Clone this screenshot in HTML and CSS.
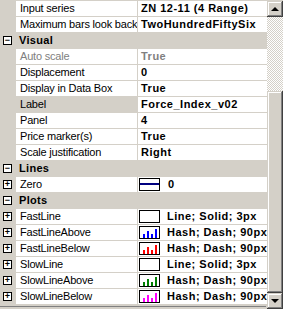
FILE: index.html
```html
<!DOCTYPE html>
<html lang="en">
<head>
    <meta charset="UTF-8">
    <title>Indicator Properties</title>
    <link rel="stylesheet" href="styles.css">
</head>
<body>
    <div class="grid">
        <div class="rows">
            <div class="row"><span class="gut"></span><span class="name">Input series</span><span class="val">ZN 12-11 (4 Range)</span></div>
            <div class="row"><span class="gut"></span><span class="name">Maximum bars look back</span><span class="val">TwoHundredFiftySix</span></div>
            <div class="row cat"><span class="gut"><i class="box">&minus;</i></span><span class="title">Visual</span></div>
            <div class="row off"><span class="gut"></span><span class="name">Auto scale</span><span class="val">True</span></div>
            <div class="row"><span class="gut"></span><span class="name">Displacement</span><span class="val">0</span></div>
            <div class="row"><span class="gut"></span><span class="name">Display in Data Box</span><span class="val">True</span></div>
            <div class="row sel"><span class="gut"></span><span class="name">Label</span><span class="val">Force_Index_v02</span></div>
            <div class="row"><span class="gut"></span><span class="name">Panel</span><span class="val">4</span></div>
            <div class="row"><span class="gut"></span><span class="name">Price marker(s)</span><span class="val">True</span></div>
            <div class="row"><span class="gut"></span><span class="name">Scale justification</span><span class="val">Right</span></div>
            <div class="row cat"><span class="gut"><i class="box">&minus;</i></span><span class="title">Lines</span></div>
            <div class="row"><span class="gut"><i class="box">+</i></span><span class="name">Zero</span><span class="val">
                <svg class="swatch" width="21" height="13" viewBox="0 0 21 13"><rect x="0.5" y="0.5" width="20" height="12" fill="#fff" stroke="#000"/><rect x="1" y="5" width="19" height="2" fill="#000080"/></svg><span class="txt wide">0</span></span></div>
            <div class="row cat"><span class="gut"><i class="box">&minus;</i></span><span class="title">Plots</span></div>
            <div class="row"><span class="gut"><i class="box">+</i></span><span class="name">FastLine</span><span class="val">
                <svg class="swatch" width="21" height="13" viewBox="0 0 21 13"><rect x="0.5" y="0.5" width="20" height="12" fill="#fff" stroke="#000"/></svg><span class="txt">Line; Solid; 3px</span></span></div>
            <div class="row"><span class="gut"><i class="box">+</i></span><span class="name">FastLineAbove</span><span class="val">
                <svg class="swatch" width="21" height="13" viewBox="0 0 21 13"><rect x="0.5" y="0.5" width="20" height="12" fill="#fff" stroke="#000"/><g fill="#0000ff"><rect x="4" y="8" width="2" height="4"/><rect x="8" y="5" width="2" height="7"/><rect x="12" y="8" width="2" height="4"/><rect x="16" y="3" width="2" height="9"/></g></svg><span class="txt">Hash; Dash; 90px</span></span></div>
            <div class="row"><span class="gut"><i class="box">+</i></span><span class="name">FastLineBelow</span><span class="val">
                <svg class="swatch" width="21" height="13" viewBox="0 0 21 13"><rect x="0.5" y="0.5" width="20" height="12" fill="#fff" stroke="#000"/><g fill="#ff0000"><rect x="4" y="8" width="2" height="4"/><rect x="8" y="5" width="2" height="7"/><rect x="12" y="8" width="2" height="4"/><rect x="16" y="3" width="2" height="9"/></g></svg><span class="txt">Hash; Dash; 90px</span></span></div>
            <div class="row"><span class="gut"><i class="box">+</i></span><span class="name">SlowLine</span><span class="val">
                <svg class="swatch" width="21" height="13" viewBox="0 0 21 13"><rect x="0.5" y="0.5" width="20" height="12" fill="#fff" stroke="#000"/></svg><span class="txt">Line; Solid; 3px</span></span></div>
            <div class="row"><span class="gut"><i class="box">+</i></span><span class="name">SlowLineAbove</span><span class="val">
                <svg class="swatch" width="21" height="13" viewBox="0 0 21 13"><rect x="0.5" y="0.5" width="20" height="12" fill="#fff" stroke="#000"/><g fill="#008000"><rect x="4" y="8" width="2" height="4"/><rect x="8" y="5" width="2" height="7"/><rect x="12" y="8" width="2" height="4"/><rect x="16" y="3" width="2" height="9"/></g></svg><span class="txt">Hash; Dash; 90px</span></span></div>
            <div class="row"><span class="gut"><i class="box">+</i></span><span class="name">SlowLineBelow</span><span class="val">
                <svg class="swatch" width="21" height="13" viewBox="0 0 21 13"><rect x="0.5" y="0.5" width="20" height="12" fill="#fff" stroke="#000"/><g fill="#ff00ff"><rect x="4" y="8" width="2" height="4"/><rect x="8" y="5" width="2" height="7"/><rect x="12" y="8" width="2" height="4"/><rect x="16" y="3" width="2" height="9"/></g></svg><span class="txt">Hash; Dash; 90px</span></span></div>
            <div class="foot"></div>
        </div>
        <div class="scroll">
            <div class="btn"><i class="arrow up"></i></div>
            <div class="track"></div>
            <div class="thumb"></div>
            <div class="btn"><i class="arrow down"></i></div>
        </div>
    </div>
</body>
</html>
```

FILE: styles.css
```css
body {
    margin: 0;
    background-color: #d4d0c8;
    font-family: "Liberation Sans", Arial, sans-serif;
    font-size: 11px;
    color: black;
}

.grid {
    display: flex;
    gap: 1px;
    width: 283px;
    height: 309px;
    padding-top: 1px;
    box-sizing: border-box;
    overflow: hidden;
}

.rows {
    width: 266px;
    display: flex;
    flex-direction: column;
}

.row {
    display: grid;
    grid-template-columns: 15px 121px 129px;
    column-gap: 1px;
    height: 15px;
    line-height: 15px;
    border-bottom: 1px solid #d4d0c8;
    white-space: nowrap;
}

.gut {
    display: flex;
    align-items: center;
    justify-content: center;
}

.name, .val {
    background-color: white;
    overflow: hidden;
    padding-left: 4px;
}

.name {
    letter-spacing: -0.2px;
}

.val {
    display: flex;
    align-items: center;
    padding-left: 3px;
    font-weight: bold;
    letter-spacing: 0.5px;
}

.off .name, .off .val {
    color: #808080;
}

.sel .name {
    background-color: #d4d0c8;
}

.cat .title {
    grid-column: 2 / 4;
    padding-left: 3px;
    font-weight: bold;
    letter-spacing: 0.3px;
}

.box {
    display: block;
    width: 7px;
    height: 7px;
    border: 1px solid black;
    background-color: white;
    font-style: normal;
    font-weight: bold;
    font-size: 9px;
    line-height: 7px;
    text-align: center;
}

.swatch {
    display: block;
    flex-shrink: 0;
    margin-left: -2px;
}

.txt {
    margin-left: 7px;
}

.txt.wide {
    margin-left: 8px;
}

.foot {
    height: 1px;
    margin-top: 1px;
    background-color: #808080;
}

.scroll {
    width: 16px;
    display: flex;
    flex-direction: column;
}

.btn, .thumb {
    background-color: #d4d0c8;
    box-shadow: inset -1px -1px #404040, inset 1px 1px #d4d0c8, inset -2px -2px #808080, inset 2px 2px #fff;
}

.btn {
    height: 16px;
    display: flex;
    align-items: center;
    justify-content: center;
}

.track {
    height: 74px;
    background: repeating-conic-gradient(#fff 0 25%, #d4d0c8 0 50%) 0 0 / 2px 2px;
}

.thumb {
    height: 202px;
}

.arrow {
    width: 0;
    height: 0;
    border-left: 4px solid transparent;
    border-right: 4px solid transparent;
}

.arrow.up {
    border-bottom: 4px solid black;
    margin-top: -1px;
}

.arrow.down {
    border-top: 4px solid black;
}
```
